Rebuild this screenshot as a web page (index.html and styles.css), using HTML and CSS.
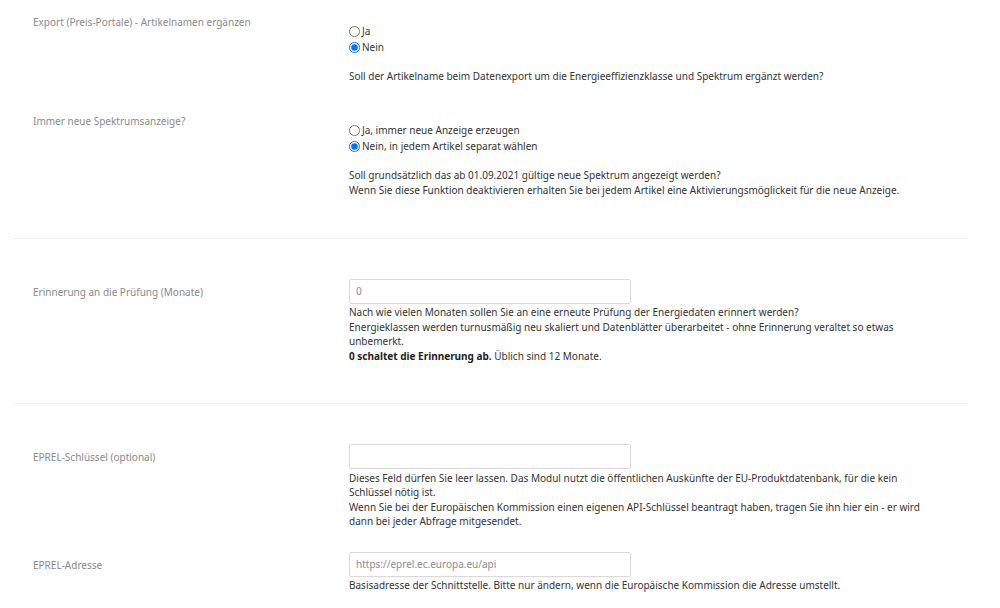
FILE: index.html
```html
<!DOCTYPE html>
<html lang="de">
<head>
<meta charset="utf-8">
<title>Einstellungen</title>
<link rel="stylesheet" href="styles.css">
</head>
<body>
<form class="settings">
  <section class="section first">
    <div class="row">
      <div class="label">Export (Preis-Portale) - Artikelnamen ergänzen</div>
      <div class="control radios">
        <label class="radio"><input type="radio" name="export"><span>Ja</span></label>
        <label class="radio"><input type="radio" name="export" checked><span>Nein</span></label>
        <p class="desc desc-radio">Soll der Artikelname beim Datenexport um die Energieeffizienzklasse und Spektrum ergänzt werden?</p>
      </div>
    </div>
    <div class="row row-next">
      <div class="label">Immer neue Spektrumsanzeige?</div>
      <div class="control radios">
        <label class="radio"><input type="radio" name="spektrum"><span>Ja, immer neue Anzeige erzeugen</span></label>
        <label class="radio"><input type="radio" name="spektrum" checked><span>Nein, in jedem Artikel separat wählen</span></label>
        <p class="desc desc-radio">Soll grundsätzlich das ab 01.09.2021 gültige neue Spektrum angezeigt werden?<br>Wenn Sie diese Funktion deaktivieren erhalten Sie bei jedem Artikel eine Aktivierungsmöglickeit für die neue Anzeige.</p>
      </div>
    </div>
  </section>
  <section class="section">
    <div class="row">
      <div class="label label-input">Erinnerung an die Prüfung (Monate)</div>
      <div class="control">
        <input class="text" type="text" value="0">
        <p class="desc">Nach wie vielen Monaten sollen Sie an eine erneute Prüfung der Energiedaten erinnert werden?<br>Energieklassen werden turnusmäßig neu skaliert und Datenblätter überarbeitet - ohne Erinnerung veraltet so etwas unbemerkt.<br><strong>0 schaltet die Erinnerung ab.</strong> Üblich sind 12 Monate.</p>
      </div>
    </div>
  </section>
  <section class="section last">
    <div class="row">
      <div class="label label-input">EPREL-Schlüssel (optional)</div>
      <div class="control">
        <input class="text" type="text" value="">
        <p class="desc">Dieses Feld dürfen Sie leer lassen. Das Modul nutzt die öffentlichen Auskünfte der EU-Produktdatenbank, für die kein Schlüssel nötig ist.<br>Wenn Sie bei der Europäischen Kommission einen eigenen API-Schlüssel beantragt haben, tragen Sie ihn hier ein - er wird dann bei jeder Abfrage mitgesendet.</p>
      </div>
    </div>
    <div class="row row-input-next">
      <div class="label label-input">EPREL-Adresse</div>
      <div class="control">
        <input class="text" type="text" value="https://eprel.ec.europa.eu/api">
        <p class="desc">Basisadresse der Schnittstelle. Bitte nur ändern, wenn die Europäische Kommission die Adresse umstellt.</p>
      </div>
    </div>
  </section>
</form>
</body>
</html>
```
FILE: styles.css
```css
html, body {
  margin: 0;
  padding: 0;
  background: #ffffff;
}

body {
  font-family: "Noto Sans", "Open Sans", sans-serif;
  font-size: 10px;
  line-height: 14.5px;
  color: #333333;
}

.settings {
  width: 956px;
  margin-left: 12px;
}

.section {
  padding: 40px 0 40px;
  border-bottom: 1.5px solid #f2f2f2;
}

.section.first {
  padding-top: 14.5px;
}

.section.last {
  border-bottom: none;
  padding-bottom: 20px;
}

.row {
  display: grid;
  grid-template-columns: 337px 1fr;
}

.row-next {
  margin-top: 30px;
}

.row-input-next {
  margin-top: 23px;
}

.label {
  padding-left: 21px;
  color: #8a8a8a;
  line-height: 15px;
}

.label-input {
  padding-top: 6px;
}

.control {
  display: flex;
  flex-direction: column;
  align-items: flex-start;
  max-width: 574px;
}

.radios {
  padding-top: 9px;
}

.radio {
  display: flex;
  align-items: center;
  height: 16px;
  cursor: pointer;
}

.radio input {
  width: 11px;
  height: 11px;
  margin: 0 2px 0 0;
  accent-color: #0075ff;
}

.desc {
  margin: 1.5px 0 0;
}

.desc-radio {
  margin-top: 13px;
  line-height: 15px;
}

.desc strong {
  font-weight: 700;
  color: #222222;
}

.text {
  box-sizing: border-box;
  width: 282px;
  height: 25px;
  margin: 0;
  padding: 0 6px;
  border: 1px solid #d9d9d9;
  border-radius: 2px;
  font-family: "Noto Sans", "Open Sans", sans-serif;
  font-size: 10px;
  color: #8c8c8c;
  background: #ffffff;
  outline: none;
}
```
